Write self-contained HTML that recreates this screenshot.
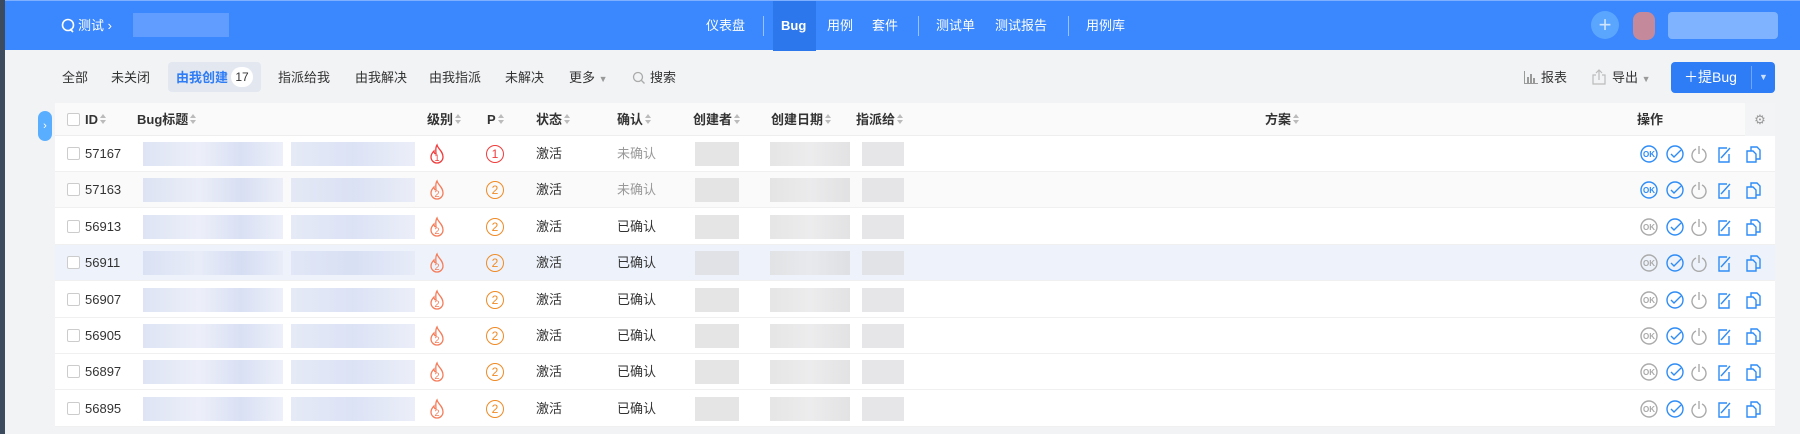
<!DOCTYPE html>
<html><head><meta charset="utf-8"><style>
*{margin:0;padding:0;box-sizing:border-box}
body{width:1800px;height:434px;overflow:hidden;background:#f2f3f5;font-family:"Liberation Sans","Noto Sans CJK SC",sans-serif;font-size:13px;color:#333;position:relative}
.a{position:absolute;white-space:nowrap;line-height:16px}
#hd{position:absolute;left:0;top:0;width:1800px;height:50px;background:#3a87fe;border-top:1px solid #7fb0ff}
#hd .a{color:#fff;font-size:13px;top:17px}
.dv{position:absolute;top:15px;width:1px;height:20px;background:#9cc1ff}
#strip{position:absolute;left:0;top:0;width:5px;height:434px;background:#3d4b5e}
.tb{top:70px;font-size:13px;color:#333}
#tbl{position:absolute;left:55px;top:103px;width:1720px;height:324px;background:#fff}
.hr{position:absolute;left:0;top:0;width:1720px;height:33px;background:#fafafa;border-bottom:1px solid #eee}
.hr .a{top:9px;font-weight:bold;color:#333}
.row{position:absolute;left:0;width:1720px;height:36px;border-bottom:1px solid #f0f0f0}
.row .a{top:10px}
.cb{position:absolute;width:13px;height:13px;border:1px solid #ccc;border-radius:2px;background:#fff}
.s{display:inline-block;width:7px;height:12px;vertical-align:-2px;margin-left:2px;position:relative}
.s:before{content:"";position:absolute;left:0;top:0;border:3.5px solid transparent;border-bottom:4px solid #bbb;border-top:0}
.s:after{content:"";position:absolute;left:0;top:6px;border:3.5px solid transparent;border-top:4px solid #bbb;border-bottom:0}
.bl{position:absolute;height:24px;top:6px;opacity:.75}
</style></head><body>
<div id="hd">
<svg class="a" style="left:61px;top:17px" width="14" height="16" viewBox="0 0 14 16" fill="none" stroke="#fff" stroke-width="1.6"><circle cx="7" cy="7" r="5.5"/><path d="M9 11l3 3"/></svg>
<div class="a" style="left:78px">测试 ›</div>
<div class="a" style="left:133px;top:12px;width:96px;height:24px;background:#6aa3fe;opacity:.8"></div>
<div class="a" style="left:706px">仪表盘</div>
<div class="dv" style="left:763px"></div>
<div class="a" style="left:773px;top:0;width:43px;height:50px;background:#2d77ec"></div>
<div class="a" style="left:781px;font-weight:bold">Bug</div>
<div class="a" style="left:827px">用例</div>
<div class="a" style="left:872px">套件</div>
<div class="dv" style="left:918px"></div>
<div class="a" style="left:936px">测试单</div>
<div class="a" style="left:995px">测试报告</div>
<div class="dv" style="left:1068px"></div>
<div class="a" style="left:1086px">用例库</div>
<div class="a" style="left:1591px;top:10px;width:28px;height:28px;border-radius:50%;background:#5aa6ff;text-align:center;line-height:27px;font-size:22px;color:#cfe4ff">+</div>
<div class="a" style="left:1633px;top:11px;width:22px;height:28px;border-radius:8px;background:#c4899a"></div>
<div class="a" style="left:1668px;top:11px;width:110px;height:27px;background:#8dbbff;border-radius:4px;opacity:.85"></div>
</div>
<div id="strip"></div>
<div class="a tb" style="left:62px">全部</div>
<div class="a tb" style="left:111px">未关闭</div>
<div class="a" style="left:168px;top:62px;width:93px;height:30px;background:#e3e8f0;border-radius:4px"></div>
<div class="a tb" style="left:176px;color:#2e7cf6;font-weight:bold">由我创建</div>
<div class="a" style="left:231px;top:67px;width:22px;height:20px;border-radius:10px;background:#fff;font-size:12px;text-align:center;line-height:20px">17</div>
<div class="a tb" style="left:278px">指派给我</div>
<div class="a tb" style="left:355px">由我解决</div>
<div class="a tb" style="left:429px">由我指派</div>
<div class="a tb" style="left:505px">未解决</div>
<div class="a tb" style="left:569px">更多 <span style="color:#999;font-size:9px">▼</span></div>
<svg class="a" style="left:632px;top:71px" width="14" height="14" viewBox="0 0 14 14" fill="none" stroke="#aaa" stroke-width="1.3"><circle cx="6" cy="6" r="4.5"/><path d="M9.5 9.5l3 3"/></svg>
<div class="a tb" style="left:650px">搜索</div>
<svg class="a" style="left:1524px;top:71px" width="14" height="13" viewBox="0 0 14 13" fill="#999"><rect x="0" y="0" width="1" height="13"/><rect x="0" y="12" width="14" height="1"/><rect x="3" y="6" width="2" height="6"/><rect x="6" y="3" width="2" height="9"/><rect x="9" y="7" width="2" height="5"/></svg>
<div class="a tb" style="left:1541px">报表</div>
<svg class="a" style="left:1592px;top:69px" width="14" height="16" viewBox="0 0 14 16" fill="none" stroke="#bbb" stroke-width="1.2"><path d="M4 6H1v9h12V6h-3M7 11V1M4 4l3-3 3 3"/></svg>
<div class="a tb" style="left:1612px">导出 <span style="color:#999;font-size:9px">▼</span></div>
<div class="a" style="left:1671px;top:62px;width:104px;height:31px;background:#2e7cf6;border-radius:4px;color:#fff;font-size:14px;line-height:31px;padding-left:13px">＋提Bug<span style="position:absolute;left:80px;top:4px;width:1px;height:23px;background:#6fa6fa"></span><span style="position:absolute;left:88px;top:0;font-size:9px;color:#cfe0ff">▼</span></div>
<div class="a" style="left:38px;top:111px;width:14px;height:30px;background:#5aaeff;border-radius:7px;color:#fff;font-size:11px;text-align:center;line-height:30px">›</div>
<div id="tbl">
<div class="hr">
<div class="cb" style="left:12px;top:10px"></div>
<div class="a" style="left:30px">ID<span class="s"></span></div>
<div class="a" style="left:82px">Bug标题<span class="s"></span></div>
<div class="a" style="left:372px">级别<span class="s"></span></div>
<div class="a" style="left:432px">P<span class="s"></span></div>
<div class="a" style="left:481px">状态<span class="s"></span></div>
<div class="a" style="left:562px">确认<span class="s"></span></div>
<div class="a" style="left:638px">创建者<span class="s"></span></div>
<div class="a" style="left:716px">创建日期<span class="s"></span></div>
<div class="a" style="left:801px">指派给<span class="s"></span></div>
<div class="a" style="left:1210px">方案<span class="s"></span></div>
<div class="a" style="left:1582px">操作</div>
<div class="a" style="left:1690px;top:0;width:30px;height:33px;background:#f3f4f6;color:#999;text-align:center;line-height:33px;font-weight:normal">⚙</div>
</div>
</div>
<div id="rows"></div>
<script>
var ids=["57167","57163","56913","56911","56907","56905","56897","56895"];
var h="";
for(var i=0;i<8;i++){
var t=136+i*36.4;var bg=i==3?"#eef3fb":(i==1?"#fafafa":"#fff");
var un=i<2;var r=i==0;var c=r?"#f03b3b":"#f08a24";var fc=r?"#f03b3b":"#f47c5a";
var ok=i<2?"#2e8cf6":"#aaa";
h+='<div class="row" style="left:55px;top:'+t+'px;background:'+bg+'">'+
'<div class="cb" style="left:12px;top:11px"></div>'+
'<div class="a" style="left:30px">'+ids[i]+'</div>'+
'<div class="bl" style="left:88px;width:140px;background:linear-gradient(90deg,#d3dbf1,#e6eaf7 40%,#cdd6f0 70%,#e7ebf8)"></div>'+
'<div class="bl" style="left:236px;width:124px;background:linear-gradient(90deg,#dde3f4,#d0d9f1 50%,#e5e9f7)"></div>'+
'<svg class="a" style="left:373px;top:7px" width="18" height="22" viewBox="0 0 18 22" fill="none" stroke="'+fc+'" stroke-width="1.3"><path d="M9 2C10 6 15 8 15 14a6 6 0 0 1-12 0c0-3 2-5 3-6 0 2 1 3 2 3C8 8 7 5 9 2z"/><text x="9" y="18" font-size="9" text-anchor="middle" fill="'+fc+'" stroke="none" font-family="Liberation Sans">'+(r?1:2)+'</text></svg>'+
'<div class="a" style="left:431px;top:9px;width:18px;height:18px;border:1.3px solid '+c+';border-radius:50%;color:'+c+';font-size:12px;text-align:center;line-height:16px">'+(r?1:2)+'</div>'+
'<div class="a" style="left:481px">激活</div>'+
'<div class="a" style="left:562px;color:'+(un?"#999":"#333")+'">'+(un?"未确认":"已确认")+'</div>'+
'<div class="bl" style="left:640px;width:44px;background:#dcdcde"></div>'+
'<div class="bl" style="left:715px;width:80px;background:linear-gradient(90deg,#ddd,#e6e6e8,#d9d9db)"></div>'+
'<div class="bl" style="left:807px;width:42px;background:#dedee0"></div>'+
'<svg class="a" style="left:1585px;top:8px" width="130" height="20" viewBox="0 0 130 20" fill="none" stroke-width="1.4">'+
'<circle cx="9" cy="10" r="8" stroke="'+ok+'"/><text x="9" y="13" font-size="8" font-weight="bold" text-anchor="middle" fill="'+ok+'" stroke="none" font-family="Liberation Sans">OK</text>'+
'<circle cx="35" cy="10" r="8" stroke="#2e8cf6"/><path d="M31 10l3 3 7-7" stroke="#2e8cf6"/>'+
'<path d="M56 5a7 7 0 1 0 6 0M59 2v8" stroke="#aaa"/>'+
'<path d="M89 10v8H79V4h8M81 14l9-10" stroke="#2e8cf6"/>'+
'<path d="M107 7h6l3 3v8h-9zM111 7V3h6l3 3v9h-4" stroke="#2e8cf6"/>'+
'</svg></div>';}
document.getElementById("rows").innerHTML=h;
</script>
</body></html>
